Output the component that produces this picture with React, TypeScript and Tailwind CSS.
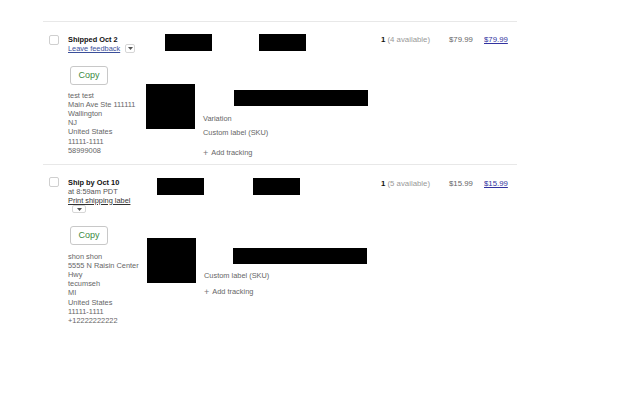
import React from "react";

type Order = {
  status: string;
  sub?: string;
  link: string;
  linkBlue: boolean;
  dropInline: boolean;
  address: string[];
  qty: string;
  price: string;
  boxes: [number, number];
  imgTop: string;
  imgLeft: string;
  detailTop: string;
  titleLeft: string;
  copyTop: string;
  showVariation: boolean;
};

const orders: Order[] = [
  {
    status: "Shipped Oct 2",
    link: "Leave feedback",
    linkBlue: true,
    dropInline: true,
    address: [
      "test test",
      "Main Ave Ste 111111",
      "Wallington",
      "NJ",
      "United States",
      "11111-1111",
      "58999008",
    ],
    qty: "(4 available)",
    price: "$79.99",
    boxes: [19, 47],
    imgTop: "mt-[33px]",
    imgLeft: "ml-0",
    detailTop: "mt-[6px]",
    titleLeft: "ml-[31px]",
    copyTop: "mt-[13.5px]",
    showVariation: true,
  },
  {
    status: "Ship by Oct 10",
    sub: "at 8:59am PDT",
    link: "Print shipping label",
    linkBlue: false,
    dropInline: false,
    address: [
      "shon shon",
      "5555 N Raisin Center",
      "Hwy",
      "tecumseh",
      "MI",
      "United States",
      "11111-1111",
      "+12222222222",
    ],
    qty: "(5 available)",
    price: "$15.99",
    boxes: [11, 49],
    imgTop: "mt-[43px]",
    imgLeft: "ml-[1px]",
    detailTop: "mt-[10px]",
    titleLeft: "ml-[29px]",
    copyTop: "mt-[13px]",
    showVariation: false,
  },
];

function Caret() {
  return (
    <svg width="5" height="3" viewBox="0 0 5 3">
      <path d="M0 0h5L2.5 3z" fill="#555" />
    </svg>
  );
}

function OrderRow({ o, first }: { o: Order; first: boolean }) {
  return (
    <div className={`flex ${first ? "pb-[4px] border-b border-[#e8e8e8]" : "pb-[40px]"}`}>
      <div className="w-[25px] pl-[6px]">
        <div className={`w-[10px] h-[10px] border border-[#cfcfcf] rounded-[2px] bg-white ${first ? "mt-[13px]" : "mt-[12px]"}`} />
      </div>

      <div className="w-[78px] pt-[12.5px] text-[7.4px] leading-[9px]">
        <div className="font-bold text-[#111]">{o.status}</div>
        {o.sub && <div className="text-[#555]">{o.sub}</div>}
        <div className="flex items-center gap-[5px] whitespace-nowrap">
          <span className={`underline ${o.linkBlue ? "text-[#3b4f9a]" : "text-[#333]"}`}>{o.link}</span>
          {o.dropInline && (
            <span className="inline-flex items-center justify-center w-[10px] h-[9px] border border-[#d6d6d6] rounded-[2px] bg-white">
              <Caret />
            </span>
          )}
        </div>
        {!o.dropInline && (
          <div className="ml-[4px] mt-[0.5px] w-[14px]">
            <span className="flex items-center justify-center w-[14px] h-[8px] border border-[#d6d6d6] rounded-[2px]">
              <Caret />
            </span>
          </div>
        )}
        <button
          className={`${o.copyTop} ml-[2px] w-[38px] h-[19px] border border-[#c8c8c8] rounded-[3px] bg-white text-[9px] font-medium text-[#3b8a42] flex items-center justify-center`}
        >
          Copy
        </button>
        <div className={`${first ? "mt-[5.5px]" : "mt-[6.5px]"} text-[#666] leading-[9.2px] whitespace-nowrap`}>
          {o.address.map((l) => (
            <div key={l}>{l}</div>
          ))}
        </div>
      </div>

      <div className="flex-1 flex flex-col">
        <div className={`flex items-start ${first ? "pt-[12px]" : "pt-[13px]"}`}>
          <div className="w-[47px] h-[17px] bg-black" style={{ marginLeft: o.boxes[0] }} />
          <div className="w-[47px] h-[17px] bg-black" style={{ marginLeft: o.boxes[1] }} />
          <div className="ml-auto flex text-[7.8px] leading-[12px] whitespace-nowrap">
            <div className="w-[68px]">
              <span className="font-bold text-[#111]">1</span>
              <span className="text-[#999]"> {o.qty}</span>
            </div>
            <div className="w-[35px] text-[#666]">{o.price}</div>
            <div className="w-[33px] text-[#3333a0] underline">{o.price}</div>
          </div>
        </div>

        <div className={`flex ${o.imgTop}`}>
          <div className={`${o.imgLeft} w-[49px] h-[45px] bg-black`} />
          <div className={`ml-[8px] ${o.detailTop} text-[7.4px] text-[#666] leading-[14px] whitespace-nowrap`}>
            <div className={`${o.titleLeft} w-[134px] h-[16px] bg-black`} />
            {o.showVariation && <div className="mt-[6px]">Variation</div>}
            <div className={o.showVariation ? "" : "mt-[5px]"}>Custom label (SKU)</div>
            <div className={`${o.showVariation ? "mt-[6px]" : "mt-[2px]"} flex items-center gap-[3px]`}>
              <span className="text-[9px] leading-[14px] text-[#777]">+</span>
              <span>Add tracking</span>
            </div>
          </div>
        </div>
      </div>
    </div>
  );
}

export default function App() {
  return (
    <div
      className="w-[640px] h-[400px] bg-white overflow-hidden pt-[21px]"
      style={{ fontFamily: '"Liberation Sans", Arial, sans-serif' }}
    >
      <div className="ml-[43px] w-[474px] border-t border-[#e8e8e8]">
        {orders.map((o, i) => (
          <OrderRow key={o.status} o={o} first={i === 0} />
        ))}
      </div>
    </div>
  );
}
